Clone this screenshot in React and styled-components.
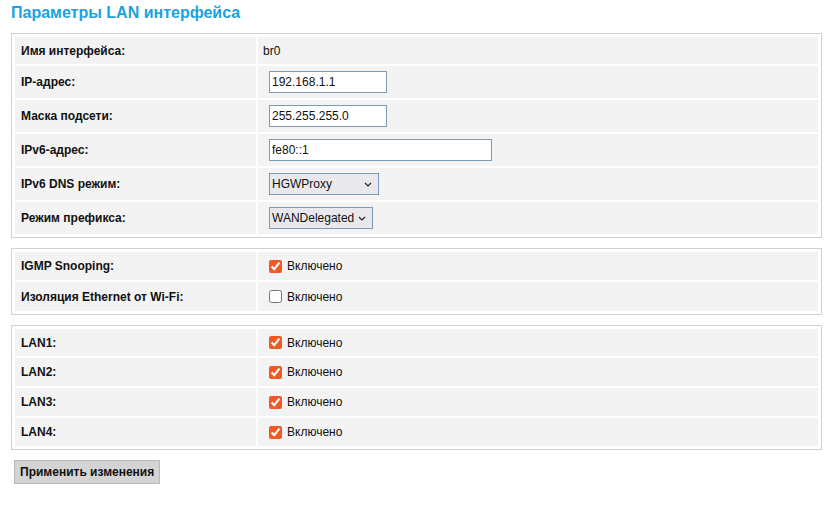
import React from 'react'
import { useState } from 'react';
import styled, { createGlobalStyle } from 'styled-components';

const GlobalStyle=createGlobalStyle`
  body{
    margin:0;
    background:#fff;
    font-family:"Liberation Sans", Arial, sans-serif;
    color:#111;
  }
`;

const Page=styled.div`
  padding:3px 15px 20px 11px;
`;

const Title=styled.h1`
  font-size:16px;
  font-weight:700;
  color:#1ba2dc;
  margin:0 0 11px 0;
  line-height:19px;
`;

const Section=styled.div`
  border:1px solid #d0d0d0;
  padding:3px;
  display:grid;
  grid-template-columns:241px 1fr;
  gap:2px;
  margin-bottom:10px;
`;

const Label=styled.div`
  background:#f3f3f3;
  font-size:12px;
  font-weight:700;
  display:flex;
  align-items:center;
  padding:0 6px;
  height:${(props)=>props.h || 28}px;
`;

const Value=styled.div`
  background:#f3f3f3;
  font-size:12px;
  display:flex;
  align-items:center;
  padding:0 5px;
  height:${(props)=>props.h || 28}px;
`;

const TextInput=styled.input`
  width:${(props)=>props.w}px;
  height:22px;
  box-sizing:border-box;
  border:1px solid #7b9bbb;
  font-family:"Liberation Sans", Arial, sans-serif;
  font-size:12px;
  color:#111;
  padding:0 2px;
  margin:0 0 0 6px;
  outline:none;
`;

const Select=styled.div`
  width:${(props)=>props.w}px;
  height:22px;
  box-sizing:border-box;
  border:1px solid #7b9bbb;
  background:#e9e9ed;
  font-size:12px;
  margin-left:6px;
  display:flex;
  align-items:center;
  justify-content:space-between;
  padding:0 6px 0 2px;
`;

const Check=styled.input`
  width:13px;
  height:13px;
  margin:0 5px 0 6px;
  accent-color:#f05a22;
`;

const Button=styled.button`
  height:24px;
  padding:0 5px;
  background:#d4d4d4;
  border:1px solid #b8b8b8;
  font-family:"Liberation Sans", Arial, sans-serif;
  font-size:12px;
  font-weight:700;
  color:#111;
  margin:0 0 0 3px;
`;

const Chevron=()=>(
  <svg width="8" height="5" viewBox="0 0 8 5">
    <path d="M1 1l3 3 3-3" fill="none" stroke="#222" strokeWidth="1.2"/>
  </svg>
);

const CheckRow=({label,checked,h})=>{
  const [on,setOn]=useState(checked)
  return (
    <>
      <Label h={h}>{label}</Label>
      <Value h={h}>
        <Check type="checkbox" checked={on} onChange={()=>setOn(!on)}/>
        Включено
      </Value>
    </>
  )
}

const App = () => {
  return (
    <Page>
      <GlobalStyle/>
      <Title>Параметры LAN интерфейса</Title>
      <Section>
        <Label h={27}>Имя интерфейса:</Label>
        <Value h={27}>br0</Value>
        <Label h={32}>IP-адрес:</Label>
        <Value h={32}><TextInput w={118} defaultValue="192.168.1.1"/></Value>
        <Label h={32}>Маска подсети:</Label>
        <Value h={32}><TextInput w={118} defaultValue="255.255.255.0"/></Value>
        <Label h={32}>IPv6-адрес:</Label>
        <Value h={32}><TextInput w={223} defaultValue="fe80::1"/></Value>
        <Label h={32}>IPv6 DNS режим:</Label>
        <Value h={32}><Select w={110}>HGWProxy<Chevron/></Select></Value>
        <Label h={32}>Режим префикса:</Label>
        <Value h={32}><Select w={104}>WANDelegated<Chevron/></Select></Value>
      </Section>
      <Section>
        <CheckRow label="IGMP Snooping:" checked={true} h={28}/>
        <CheckRow label="Изоляция Ethernet от Wi-Fi:" checked={false} h={29}/>
      </Section>
      <Section>
        <CheckRow label="LAN1:" checked={true} h={27}/>
        <CheckRow label="LAN2:" checked={true} h={28}/>
        <CheckRow label="LAN3:" checked={true} h={28}/>
        <CheckRow label="LAN4:" checked={true} h={28}/>
      </Section>
      <Button>Применить изменения</Button>
    </Page>
  );
}

export default App
